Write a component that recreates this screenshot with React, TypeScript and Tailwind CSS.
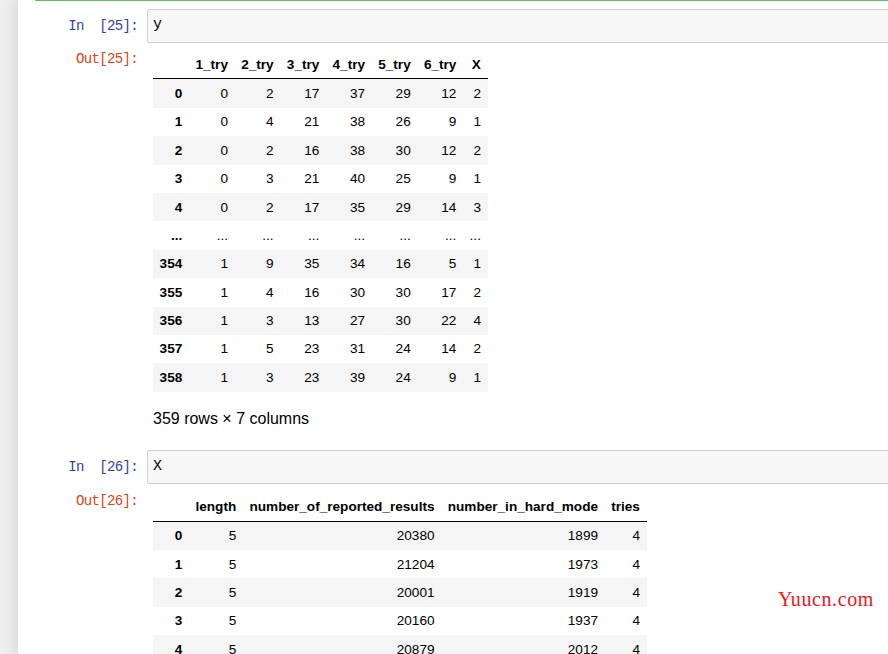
import type { ReactNode } from "react";

type Row = [string, (string | number)[]];

const dots = (n: number) => Array.from({ length: n }, () => "...");

const yColumns = ["1_try", "2_try", "3_try", "4_try", "5_try", "6_try", "X"];
const yRows: Row[] = [
  ["0", [0, 2, 17, 37, 29, 12, 2]],
  ["1", [0, 4, 21, 38, 26, 9, 1]],
  ["2", [0, 2, 16, 38, 30, 12, 2]],
  ["3", [0, 3, 21, 40, 25, 9, 1]],
  ["4", [0, 2, 17, 35, 29, 14, 3]],
  ["...", dots(7)],
  ["354", [1, 9, 35, 34, 16, 5, 1]],
  ["355", [1, 4, 16, 30, 30, 17, 2]],
  ["356", [1, 3, 13, 27, 30, 22, 4]],
  ["357", [1, 5, 23, 31, 24, 14, 2]],
  ["358", [1, 3, 23, 39, 24, 9, 1]],
];

const xColumns = ["length", "number_of_reported_results", "number_in_hard_mode", "tries"];
const xRows: Row[] = [
  ["0", [5, 20380, 1899, 4]],
  ["1", [5, 21204, 1973, 4]],
  ["2", [5, 20001, 1919, 4]],
  ["3", [5, 20160, 1937, 4]],
  ["4", [5, 20879, 2012, 4]],
  ["...", dots(4)],
  ["354", [5, 2569, 280, 4]],
  ["355", [5, 2596, 281, 4]],
  ["356", [5, 2905, 304, 4]],
  ["357", [5, 3107, 355, 4]],
  ["358", [5, 3217, 341, 4]],
];

function Prompt({ children, out }: { children: ReactNode; out?: boolean }) {
  return (
    <div
      className={
        out
          ? "w-[129px] shrink-0 pr-[9px] text-right font-['Liberation_Mono',monospace] text-[14px] leading-[18px] tracking-[-0.65px] whitespace-pre text-[#d84315]"
          : "w-[129px] shrink-0 pr-[9px] text-right font-['Liberation_Mono',monospace] text-[14px] leading-[18px] tracking-[-0.65px] whitespace-pre text-[#303f9f]"
      }
    >
      {children}
    </div>
  );
}

function InputCell({ n, code }: { n: number; code: string }) {
  return (
    <div className="flex items-center">
      <Prompt>{`In  [${n}]:`}</Prompt>
      <div className="-mr-[30px] flex h-[34px] flex-1 items-center rounded-[2px] border border-[#cfcfcf] bg-[#f7f7f7] pl-[5px] font-['Liberation_Mono',monospace] text-[15px] text-black">
        {code}
      </div>
    </div>
  );
}

function DataFrame({ columns, rows }: { columns: string[]; rows: Row[] }) {
  return (
    <table className="border-collapse font-['Liberation_Sans',Arial,sans-serif] text-[13.6px] leading-[15.2px] text-black">
      <thead className="border-b border-black">
        <tr>
          <th className="px-[6.6px] py-[6.6px]" />
          {columns.map((c) => (
            <th key={c} className="px-[6.6px] py-[6.6px] text-right align-bottom font-bold whitespace-nowrap">
              {c}
            </th>
          ))}
        </tr>
      </thead>
      <tbody>
        {rows.map(([idx, vals], i) => (
          <tr key={idx + "|" + i} className={i % 2 === 0 ? "bg-[#f5f5f5]" : "bg-white"}>
            <th className="px-[6.6px] py-[6.6px] text-right font-bold">{idx}</th>
            {vals.map((v, j) => (
              <td key={j} className="px-[6.6px] py-[6.6px] text-right whitespace-nowrap">
                {v}
              </td>
            ))}
          </tr>
        ))}
      </tbody>
    </table>
  );
}

export default function App() {
  return (
    <div className="flex h-[654px] w-[888px] overflow-hidden bg-[#eeeeee]">
      <div className="w-[18px] shrink-0" />
      <main className="relative flex-1 bg-white shadow-[0_0_12px_1px_rgba(87,87,87,0.2)]">
        <div className="ml-[17px] h-px bg-[#66bb6a]" />

        <div className="mt-[7.7px]">
          <InputCell n={25} code="y" />
        </div>
        <div className="mt-[7.3px] flex items-start">
          <Prompt out>Out[25]:</Prompt>
          <div className="pl-[6px]">
            <DataFrame columns={yColumns} rows={yRows} />
            <p className="mt-[17.8px] font-['Liberation_Sans',Arial,sans-serif] text-[16px] leading-[20px] text-black">
              359 rows × 7 columns
            </p>
          </div>
        </div>

        <div className="mt-[21px]">
          <InputCell n={26} code="X" />
        </div>
        <div className="mt-[7.7px] flex items-start">
          <Prompt out>Out[26]:</Prompt>
          <div className="pl-[6px]">
            <DataFrame columns={xColumns} rows={xRows} />
          </div>
        </div>

        <span className="absolute top-[589px] left-[760px] font-['Liberation_Serif',serif] text-[20px] leading-[20px] tracking-[0.6px] text-[#f0141e]">
          Yuucn.com
        </span>
      </main>
    </div>
  );
}
